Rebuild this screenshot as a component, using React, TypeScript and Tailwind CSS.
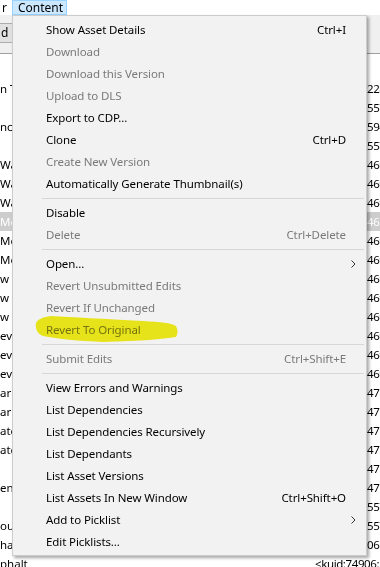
const font = { fontFamily: '"Noto Sans", "Open Sans", sans-serif' };

type Item =
  | { sep: true }
  | { label: string; shortcut?: string; disabled?: boolean; sub?: boolean; sep?: false };

const items: Item[] = [
  { label: "Show Asset Details", shortcut: "Ctrl+I" },
  { label: "Download", disabled: true },
  { label: "Download this Version", disabled: true },
  { label: "Upload to DLS", disabled: true },
  { label: "Export to CDP..." },
  { label: "Clone", shortcut: "Ctrl+D" },
  { label: "Create New Version", disabled: true },
  { label: "Automatically Generate Thumbnail(s)" },
  { sep: true },
  { label: "Disable" },
  { label: "Delete", shortcut: "Ctrl+Delete", disabled: true },
  { sep: true },
  { label: "Open...", sub: true },
  { label: "Revert Unsubmitted Edits", disabled: true },
  { label: "Revert If Unchanged", disabled: true },
  { label: "Revert To Original", disabled: true },
  { sep: true },
  { label: "Submit Edits", shortcut: "Ctrl+Shift+E", disabled: true },
  { sep: true },
  { label: "View Errors and Warnings" },
  { label: "List Dependencies" },
  { label: "List Dependencies Recursively" },
  { label: "List Dependants" },
  { label: "List Asset Versions" },
  { label: "List Assets In New Window", shortcut: "Ctrl+Shift+O" },
  { label: "Add to Picklist", sub: true },
  { label: "Edit Picklists..." },
];

// fragments of the asset list that peek out on both sides of the menu
const rows: [string, string][] = [
  ["n T", "228"],
  ["", "557"],
  ["nc", "594"],
  ["", "557"],
  ["Wa", "469"],
  ["Wa", "469"],
  ["Wa", "469"],
  ["Mo", "469"],
  ["Mo", "469"],
  ["Mo", "469"],
  ["w", "469"],
  ["w A", "469"],
  ["w A", "469"],
  ["ev", "469"],
  ["ev", "469"],
  ["ev", "469"],
  ["arly", "475"],
  ["arly", "475"],
  ["ate", "475"],
  ["ate", "475"],
  ["", "475"],
  ["en", "475"],
  ["", "557"],
  ["out", "557"],
  ["ha", "06:"],
];

const Chevron = () => (
  <svg width="5" height="8" viewBox="0 0 5 8" fill="none">
    <path d="M0.5 0.5 L4 4 L0.5 7.5" stroke="#333" strokeWidth="1" />
  </svg>
);

const App = () => {
  return (
    <div className="relative w-[380px] h-[567px] overflow-hidden bg-white text-[12px] text-black" style={font}>
      {/* menu bar */}
      <div className="h-[15px] flex items-stretch bg-white">
        <div className="w-[12px] pl-[2px] leading-[15px]">r</div>
        <div className="w-[55px] bg-[#cce8ff] border border-[#99d1ff] pl-[5px] leading-[13px]">Content</div>
      </div>

      {/* toolbar */}
      <div className="h-[39px] bg-[#f0f0f0] border-b border-[#a0a0a0] pt-[8px]">
        <div className="w-[12px] h-[20px] bg-[#e1e1e1] border-y border-[#adadad] leading-[18px] pl-[1px]">d</div>
      </div>

      {/* list */}
      <div className="pt-[25px] text-[11.5px]">
        {rows.map(([l, r], i) => (
          <div
            key={i}
            className={`h-[19px] flex items-center ${i === 7 ? "bg-[#cdcdcd] text-white" : ""}`}
          >
            <div className="w-[12px] shrink-0 whitespace-nowrap overflow-hidden">{l}</div>
            <div className="w-[355px] shrink-0" />
            <div className="whitespace-nowrap tracking-[-0.4px]">{r}</div>
          </div>
        ))}
        <div className="h-[19px] flex items-center">
          <div className="w-[315px] shrink-0 whitespace-nowrap overflow-hidden">phalt</div>
          <div className="whitespace-nowrap tracking-[-0.4px]">&lt;kuid:74906:</div>
        </div>
      </div>

      {/* context menu */}
      <div className="absolute left-[12px] top-[15px] w-[355px] bg-[#f2f2f2] border border-[#cccccc] pt-[3px] pb-[2px] text-[11.5px] tracking-[-0.1px] shadow-[2px_2px_3px_rgba(0,0,0,0.35)]">
        {items.map((it, i) =>
          it.sep ? (
            <div key={i} className="h-[7px] flex items-center pl-[29px] pr-[2px]">
              <div className="h-px w-full bg-[#d7d7d7]" />
            </div>
          ) : (
            <div
              key={i}
              className={`h-[22px] flex items-center pl-[33px] ${it.sub ? "pr-[10px]" : "pr-[20px]"} ${
                it.disabled ? "text-[#7a7a7a]" : "text-black"
              }`}
            >
              <span className="flex-1 whitespace-nowrap">{it.label}</span>
              {it.shortcut && <span className="whitespace-nowrap">{it.shortcut}</span>}
              {it.sub && <Chevron />}
            </div>
          )
        )}
      </div>

      {/* marker highlight */}
      <svg
        className="absolute left-[33px] top-[314px] mix-blend-multiply pointer-events-none"
        width="146"
        height="31"
        viewBox="0 0 146 31"
      >
        <path
          d="M3 9 C5 5 10 3 18 2 C40 3 70 5 110 7 C128 8 138 9 143 12 C145 16 145 20 143 23 C130 25 110 27 70 28 C45 27 25 25 10 22 C4 20 2 14 3 9 Z"
          fill="#f4f01c"
        />
      </svg>
    </div>
  );
};

export default App;
